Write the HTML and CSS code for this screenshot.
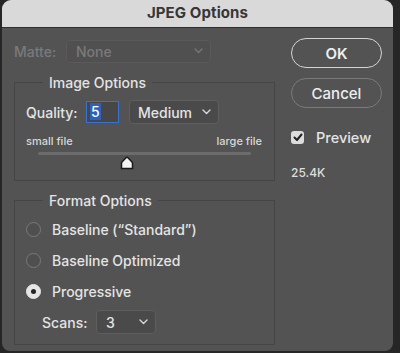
FILE: index.html
```html
<!DOCTYPE html>
<html lang="en">
  <head>
    <meta charset="UTF-8" />
    <title>JPEG Options</title>
    <link rel="stylesheet" href="styles.css">
  </head>
  <body>
    <div class="window">
      <div class="titlebar">JPEG Options</div>

      <div class="content">
        <div class="main">
          <div class="matte">
            <span class="matte-label">Matte:</span>
            <div class="select select-matte disabled">
              <span>None</span>
              <svg class="chevron" width="9" height="6" viewBox="0 0 9 6"><polyline points="1,1 4.5,4.5 8,1" /></svg>
            </div>
          </div>

          <fieldset class="group">
            <legend>Image Options</legend>
            <div class="quality">
              <span class="label">Quality:</span>
              <div class="num-input"><span class="selected">5</span></div>
              <div class="select select-medium">
                <span>Medium</span>
                <svg class="chevron" width="9" height="6" viewBox="0 0 9 6"><polyline points="1,1 4.5,4.5 8,1" /></svg>
              </div>
            </div>
            <div class="scale">
              <span>small file</span>
              <span>large file</span>
            </div>
            <div class="slider">
              <div class="track"></div>
              <svg class="thumb" style="margin-left: calc(41.7% - 7px)" width="14" height="14" viewBox="0 0 14 14">
                <path d="M1.5 12.5 V7.2 Q1.5 6.6 2 6.1 L6.3 1.6 Q7 1 7.7 1.6 L12 6.1 Q12.5 6.6 12.5 7.2 V12.5 Z" />
              </svg>
            </div>
          </fieldset>

          <fieldset class="group format">
            <legend>Format Options</legend>
            <div class="radio-row">
              <span class="radio"></span>
              <span>Baseline (“Standard”)</span>
            </div>
            <div class="radio-row">
              <span class="radio"></span>
              <span>Baseline Optimized</span>
            </div>
            <div class="radio-row">
              <span class="radio checked"></span>
              <span>Progressive</span>
            </div>
            <div class="scans">
              <span class="label">Scans:</span>
              <div class="select select-scans">
                <span>3</span>
                <svg class="chevron" width="9" height="6" viewBox="0 0 9 6"><polyline points="1,1 4.5,4.5 8,1" /></svg>
              </div>
            </div>
          </fieldset>
        </div>

        <div class="side">
          <button class="btn btn-default">OK</button>
          <button class="btn">Cancel</button>
          <div class="preview">
            <span class="checkbox">
              <svg width="10" height="9" viewBox="0 0 10 9"><polyline points="1.5,4.5 4,7 8.5,1.5" /></svg>
            </span>
            <span>Preview</span>
          </div>
          <div class="size">25.4K</div>
        </div>
      </div>
    </div>
  </body>
</html>
```

FILE: styles.css
```css
* {
  margin: 0;
  padding: 0;
  box-sizing: border-box;
}

body {
  background: #262626;
  font-family: "Inter", "Liberation Sans", sans-serif;
  font-weight: 500;
  color: #e4e4e4;
  font-size: 14px;
  width: 400px;
  height: 353px;
  overflow: hidden;
}

.window {
  margin-left: 2px;
  width: 391px;
  height: 351px;
  background: #535353;
  border-radius: 9px 9px 8px 8px;
  overflow: hidden;
}

.titlebar {
  height: 28px;
  background: #d9d9d9;
  border-bottom: 1px solid #2f2f2f;
  color: #363636;
  font-weight: 700;
  font-size: 15px;
  text-align: center;
  line-height: 26px;
  letter-spacing: 0.1px;
}

.content {
  display: flex;
  align-items: flex-start;
}

.main {
  width: 273px;
  padding: 12px 0 0 12px;
}

.matte {
  display: flex;
  align-items: center;
  height: 22px;
}

.matte-label {
  color: #7a7a7a;
  width: 52px;
}

.select {
  display: flex;
  align-items: center;
  justify-content: space-between;
  background: #4a4a4a;
  border: 1px solid #5e5e5e;
  border-radius: 4px;
  padding: 0 7px 0 9px;
}

.chevron {
  fill: none;
  stroke: #d8d8d8;
  stroke-width: 1.4;
  stroke-linecap: round;
  stroke-linejoin: round;
}

.select.disabled {
  background: #505050;
  border-color: #5a5a5a;
  color: #7a7a7a;
}

.select.disabled .chevron {
  stroke: #777;
}

.select-matte {
  width: 145px;
  height: 23px;
}

.group {
  border: 1px solid #454545;
  padding: 0 11px 10px;
  width: 261px;
  margin-top: 12px;
}

.group legend {
  margin-left: 17px;
  padding: 0 6px;
  line-height: 17px;
}

.quality {
  display: flex;
  align-items: center;
  margin-top: 9px;
  height: 24px;
}

.label {
  width: 60px;
}

.num-input {
  width: 33px;
  height: 22px;
  border: 1.5px solid #3a72d4;
  background: #474747;
  padding: 2px 3px;
  line-height: 16px;
}

.selected {
  background: #2d61c0;
  color: #fff;
  padding: 0 1px;
}

.select-medium {
  width: 90px;
  height: 24px;
  margin-left: 10px;
  padding-left: 8px;
}

.scale {
  display: flex;
  justify-content: space-between;
  font-size: 11px;
  line-height: 13px;
  color: #d8d8d8;
  margin-top: 11px;
  padding-right: 1px;
}

.slider {
  margin: 4px 12px 0 12px;
}

.track {
  height: 3px;
  background: #6c6c6c;
  border-radius: 2px;
}

.thumb {
  display: block;
  margin-top: 1px;
  fill: #f4f4f4;
  stroke: #1a1a1a;
  stroke-width: 1.5;
}

.format {
  margin-top: 11px;
}

.radio-row {
  display: flex;
  align-items: center;
  height: 31px;
}

.radio-row:first-of-type {
  margin-top: 5px;
}

.radio {
  width: 15px;
  height: 15px;
  border-radius: 50%;
  border: 1px solid #7a7a7a;
  background: #4f4f4f;
  margin-right: 11px;
}

.radio.checked {
  background: #e6e6e6;
  border-color: #e6e6e6;
  display: flex;
  align-items: center;
  justify-content: center;
}

.radio.checked::after {
  content: "";
  width: 5px;
  height: 5px;
  border-radius: 50%;
  background: #262626;
}

.scans {
  display: flex;
  align-items: center;
  margin-top: 3px;
  padding-left: 16px;
  height: 24px;
}

.scans .label {
  width: 54px;
}

.select-scans {
  width: 60px;
  height: 24px;
}

.side {
  padding: 10px 0 0 16px;
  width: 107px;
  display: flex;
  flex-direction: column;
}

.btn {
  width: 91px;
  height: 30px;
  border-radius: 15px;
  border: 1.5px solid #7a7a7a;
  background: transparent;
  color: #eee;
  font-family: inherit;
  font-size: 15px;
  font-weight: 500;
  margin-bottom: 10px;
}

.btn-default {
  border-color: #d4d4d4;
  font-weight: 600;
}

.preview {
  display: flex;
  align-items: center;
  margin-top: 11px;
  font-size: 14.5px;
}

.checkbox {
  width: 13px;
  height: 13px;
  border-radius: 3px;
  background: #dcdcdc;
  display: flex;
  align-items: center;
  justify-content: center;
  margin-right: 12px;
}

.checkbox svg {
  fill: none;
  stroke: #222;
  stroke-width: 2;
  stroke-linecap: round;
  stroke-linejoin: round;
}

.size {
  font-size: 12px;
  font-weight: 500;
  margin-top: 19px;
  color: #ddd;
}
```
